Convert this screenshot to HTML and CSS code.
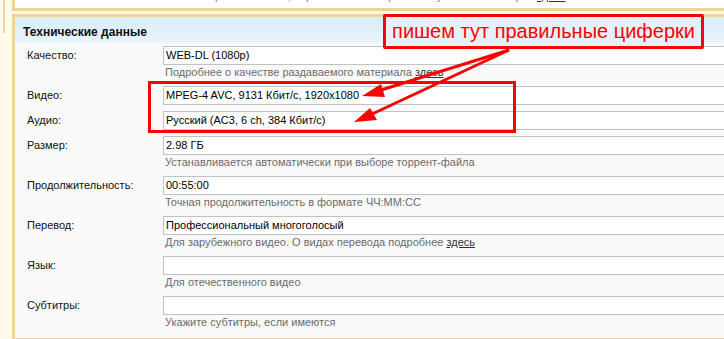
FILE: index.html
```html
<!DOCTYPE html>
<html>
<head>
    <title>Технические данные</title>
  <link rel="stylesheet" href="styles.css">
</head>
<body>
<div class="page">
    <div class="side"></div>
    <div class="main">
        <div class="prev">
            <div class="prev-hint">Если жанров несколько, перечислите их через запятую. Список жанров <u>здесь</u></div>
        </div>
        <div class="panel">
            <div class="panel-head">Технические данные</div>
            <div class="fields">
                <div class="label">Качество:</div>
                <div class="field">
                    <div class="input">WEB-DL (1080p)</div>
                    <div class="hint">Подробнее о качестве раздаваемого материала <u>здесь</u></div>
                </div>

                <div class="label">Видео:</div>
                <div class="field">
                    <div class="input">MPEG-4 AVC, 9131 Кбит/с, 1920x1080</div>
                </div>

                <div class="label">Аудио:</div>
                <div class="field">
                    <div class="input">Русский (AC3, 6 ch, 384 Кбит/с)</div>
                </div>

                <div class="label">Размер:</div>
                <div class="field">
                    <div class="input">2.98 ГБ</div>
                    <div class="hint">Устанавливается автоматически при выборе торрент-файла</div>
                </div>

                <div class="label">Продолжительность:</div>
                <div class="field">
                    <div class="input">00:55:00</div>
                    <div class="hint">Точная продолжительность в формате ЧЧ:ММ:СС</div>
                </div>

                <div class="label">Перевод:</div>
                <div class="field">
                    <div class="input">Профессиональный многоголосый</div>
                    <div class="hint">Для зарубежного видео. О видах перевода подробнее <u>здесь</u></div>
                </div>

                <div class="label">Язык:</div>
                <div class="field">
                    <div class="input"></div>
                    <div class="hint">Для отечественного видео</div>
                </div>

                <div class="label">Субтитры:</div>
                <div class="field">
                    <div class="input"></div>
                    <div class="hint">Укажите субтитры, если имеются</div>
                </div>
            </div>
        </div>
    </div>

    <!-- annotation on top of the screenshot -->
    <div class="note">пишем тут правильные циферки</div>
    <div class="frame"></div>
    <svg class="arrows" width="724" height="339" viewBox="0 0 724 339">
        <line x1="509" y1="50" x2="378" y2="91" stroke="#ff0000" stroke-width="3"/>
        <polygon points="362,96 381,84 385,97" fill="#ff0000"/>
        <line x1="509" y1="50" x2="370" y2="115" stroke="#ff0000" stroke-width="3"/>
        <polygon points="354,122 370,108 377,120" fill="#ff0000"/>
    </svg>
</div>
</body>
</html>
```

FILE: styles.css
```css
body {
  margin: 0;
  background-color: #fffaeb;
  font-family: "Liberation Sans", Arial, sans-serif;
  font-size: 11px;
  color: #222;
  overflow: hidden;
}

.page {
  position: relative;
  display: flex;
  width: 724px;
  height: 339px;
  overflow: hidden;
}

.side {
  margin-left: 3px;
  width: 0;
  height: 33px;
  border-left: 2px solid #efd29c;
}

.main {
  margin-left: 7px;
  flex: 1;
  min-width: 0;
}

.prev {
  height: 8px;
  overflow: hidden;
  background-color: #fff;
  border: 3px solid #efd29c;
  border-top: 0;
  border-right: 0;
}

.prev-hint {
  margin-top: -11px;
  padding-left: 152px;
  line-height: 15px;
  color: #777;
  white-space: nowrap;
}

.prev-hint u {
  color: #333;
}

.panel {
  margin-top: 3px;
  border: 3px solid #efd29c;
  border-right: 0;
  background-color: #fafafa;
}

.panel-head {
  height: 26px;
  box-sizing: border-box;
  padding: 8px 8px 0;
  line-height: 14px;
  font-size: 12px;
  font-weight: bold;
  color: #111;
  background: linear-gradient(#d9ecfa, #eaf4fc);
}

.fields {
  display: grid;
  grid-template-columns: 148px 1fr;
  padding-bottom: 5px;
}

.label {
  padding: 5px 0 0 12px;
  line-height: 15px;
  color: #111;
}

.field {
  padding: 3px 0;
}

.input {
  height: 19px;
  box-sizing: border-box;
  border: 1px solid #c2c2c2;
  border-right: 0;
  background-color: #fff;
  padding-left: 2px;
  line-height: 17px;
  color: #000;
}

.hint {
  padding-left: 2px;
  line-height: 15px;
  color: #6b6b6b;
}

.hint u {
  color: #333;
}

.note {
  position: absolute;
  left: 383px;
  top: 14px;
  width: 321px;
  height: 35px;
  box-sizing: border-box;
  border: 3px solid #ff0000;
  border-radius: 2px;
  background-color: #e4f1fc;
  color: #ff0000;
  font-size: 20px;
  line-height: 28px;
  text-align: center;
  white-space: nowrap;
}

.frame {
  position: absolute;
  left: 148px;
  top: 81px;
  width: 368px;
  height: 52px;
  box-sizing: border-box;
  border: 3px solid #ff0000;
}

.arrows {
  position: absolute;
  left: 0;
  top: 0;
}
```
